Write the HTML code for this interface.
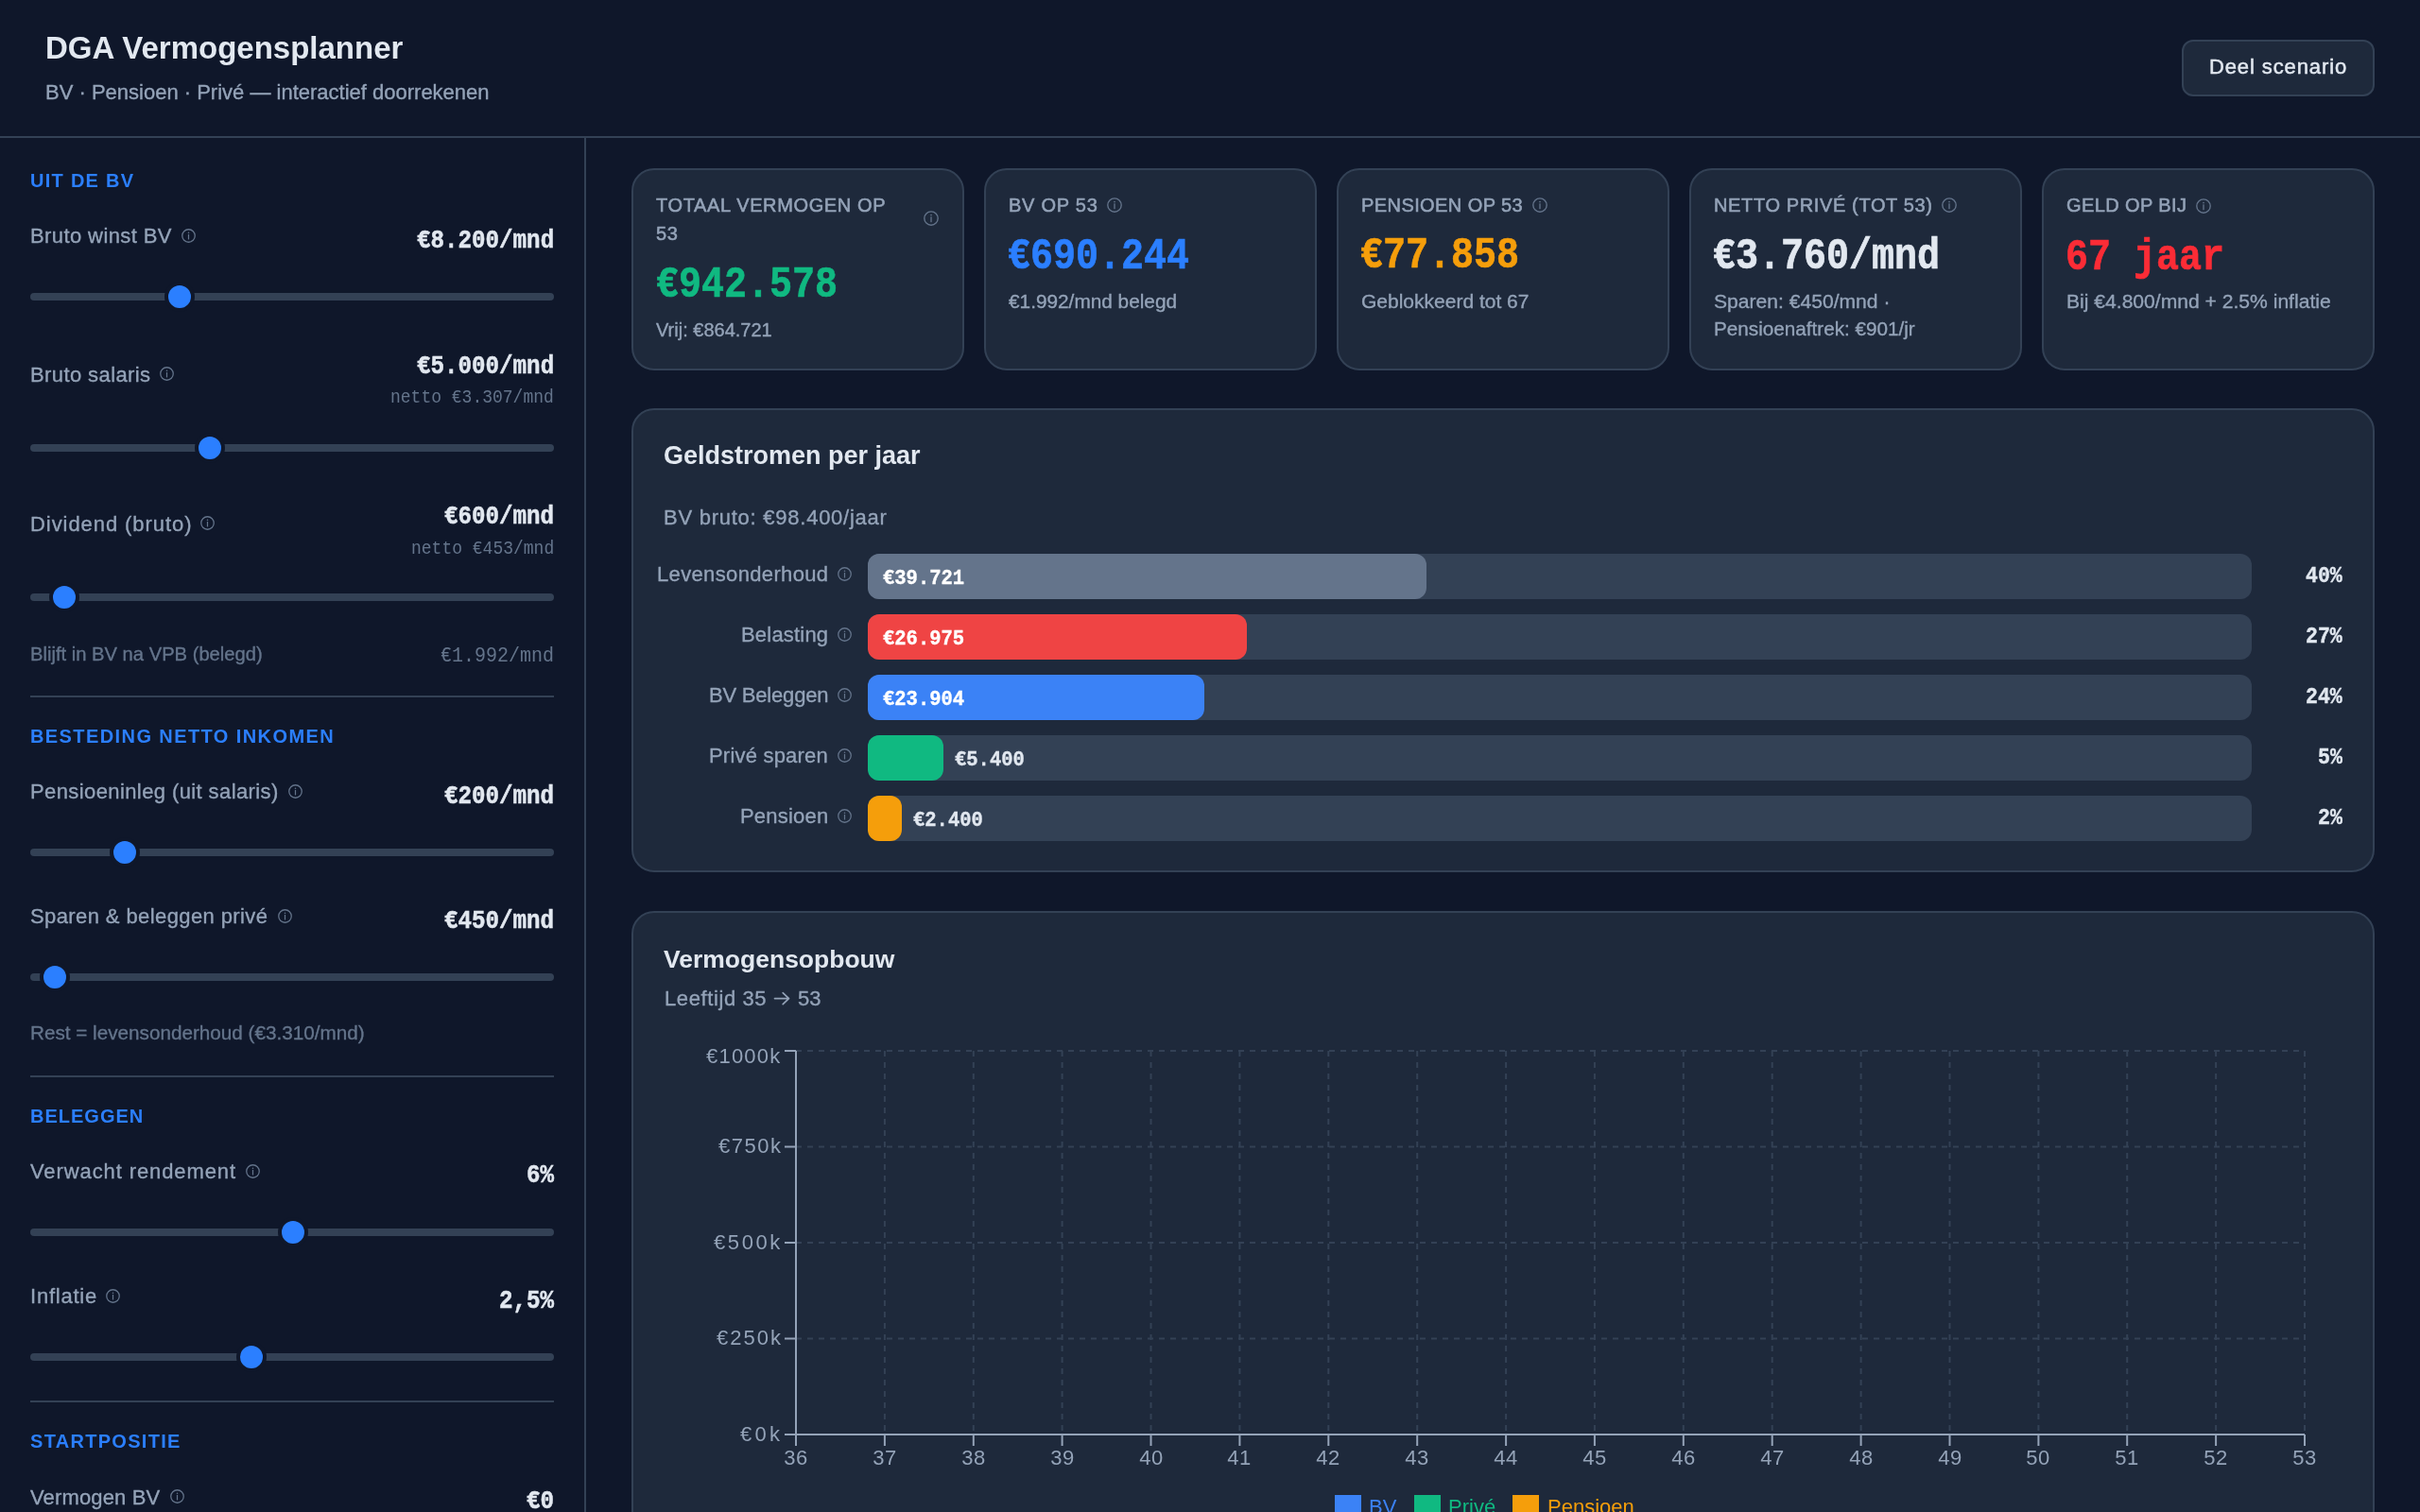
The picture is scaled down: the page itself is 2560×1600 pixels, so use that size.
<!DOCTYPE html>
<html><head><meta charset='utf-8'><style>
html,body{margin:0;padding:0;width:2560px;height:1600px;overflow:hidden;background:#0f172a;}
.t{position:absolute;white-space:nowrap;will-change:transform;}
.b{position:absolute;}
</style></head><body>
<div class='t' style='top:34.0px;font-size:33px;line-height:33px;font-family:"Liberation Sans", sans-serif;font-weight:700;color:#e2e8f0;left:48.0px;'>DGA Vermogensplanner</div>
<div class='t' style='top:87.2px;font-size:22px;line-height:22px;font-family:"Liberation Sans", sans-serif;font-weight:400;color:#94a3b8;-webkit-text-stroke-width:0.35px;left:48.0px;'>BV · Pensioen · Privé — interactief doorrekenen</div>
<div class='b' style='left:2308px;top:42px;width:204px;height:60px;background:#1e293b;border-radius:12px;box-sizing:border-box;border:2px solid #334155;'></div>
<div class='t' style='top:59.9px;font-size:22px;line-height:22px;font-family:"Liberation Sans", sans-serif;font-weight:400;color:#e2e8f0;letter-spacing:0.9px;left:2410.0px;transform:translateX(-50%);-webkit-text-stroke:0.5px #e2e8f0;'>Deel scenario</div>
<div class='b' style='left:0px;top:144px;width:2560px;height:2px;background:#334155;border-radius:0px;'></div>
<div class='b' style='left:618px;top:146px;width:2px;height:1454px;background:#334155;border-radius:0px;'></div>
<div class='t' style='top:181.3px;font-size:20px;line-height:20px;font-family:"Liberation Sans", sans-serif;font-weight:700;color:#2b7fff;letter-spacing:1.28px;left:32.0px;'>UIT DE BV</div>
<div class='t' style='top:239.4px;font-size:22px;line-height:22px;font-family:"Liberation Sans", sans-serif;font-weight:400;color:#94a3b8;letter-spacing:0.4px;-webkit-text-stroke-width:0.35px;left:32.0px;'>Bruto winst BV</div>
<svg class='b' style='left:192.0px;top:241.5px' width='15' height='15' viewBox='0 0 16 16'><circle cx='8' cy='8' r='7.2' fill='none' stroke='#64748b' stroke-width='1.35'/><circle cx='8' cy='4.5' r='0.85' fill='#64748b'/><rect x='7.35' y='6.3' width='1.3' height='5.9' fill='#64748b'/></svg>
<div class='t' style='top:244.1px;font-size:24.2px;line-height:24.2px;font-family:"Liberation Mono", monospace;font-weight:700;color:#e2e8f0;-webkit-text-stroke-width:0.45px;right:1974.0px;text-align:right;transform:scaleY(1.16);transform-origin:0 18.5px;'>€8.200/mnd</div>
<div class='b' style='left:32px;top:309.8px;width:554px;height:8px;background:#334155;border-radius:4px;'></div>
<div class='b' style='left:173.7px;top:297.8px;width:24px;height:24px;border-radius:50%;background:#2b7fff;border:4px solid #0f172a'></div>
<div class='t' style='top:386.0px;font-size:22px;line-height:22px;font-family:"Liberation Sans", sans-serif;font-weight:400;color:#94a3b8;letter-spacing:0.4px;-webkit-text-stroke-width:0.35px;left:32.0px;'>Bruto salaris</div>
<svg class='b' style='left:169.2px;top:387.5px' width='15' height='15' viewBox='0 0 16 16'><circle cx='8' cy='8' r='7.2' fill='none' stroke='#64748b' stroke-width='1.35'/><circle cx='8' cy='4.5' r='0.85' fill='#64748b'/><rect x='7.35' y='6.3' width='1.3' height='5.9' fill='#64748b'/></svg>
<div class='t' style='top:376.5px;font-size:24.2px;line-height:24.2px;font-family:"Liberation Mono", monospace;font-weight:700;color:#e2e8f0;-webkit-text-stroke-width:0.45px;right:1974.0px;text-align:right;transform:scaleY(1.16);transform-origin:0 18.5px;'>€5.000/mnd</div>
<div class='t' style='top:412.2px;font-size:18px;line-height:18px;font-family:"Liberation Mono", monospace;font-weight:400;color:#64748b;right:1974.0px;text-align:right;transform:scaleY(1.08);transform-origin:0 13.8px;'>netto €3.307/mnd</div>
<div class='b' style='left:32px;top:469.9px;width:554px;height:8px;background:#334155;border-radius:4px;'></div>
<div class='b' style='left:205.7px;top:457.9px;width:24px;height:24px;border-radius:50%;background:#2b7fff;border:4px solid #0f172a'></div>
<div class='t' style='top:543.7px;font-size:22px;line-height:22px;font-family:"Liberation Sans", sans-serif;font-weight:400;color:#94a3b8;letter-spacing:0.93px;-webkit-text-stroke-width:0.35px;left:32.0px;'>Dividend (bruto)</div>
<svg class='b' style='left:211.5px;top:546.1px' width='15' height='15' viewBox='0 0 16 16'><circle cx='8' cy='8' r='7.2' fill='none' stroke='#64748b' stroke-width='1.35'/><circle cx='8' cy='4.5' r='0.85' fill='#64748b'/><rect x='7.35' y='6.3' width='1.3' height='5.9' fill='#64748b'/></svg>
<div class='t' style='top:535.9px;font-size:24.2px;line-height:24.2px;font-family:"Liberation Mono", monospace;font-weight:700;color:#e2e8f0;-webkit-text-stroke-width:0.45px;right:1974.0px;text-align:right;transform:scaleY(1.16);transform-origin:0 18.5px;'>€600/mnd</div>
<div class='t' style='top:571.8px;font-size:18px;line-height:18px;font-family:"Liberation Mono", monospace;font-weight:400;color:#64748b;right:1974.0px;text-align:right;transform:scaleY(1.08);transform-origin:0 13.8px;'>netto €453/mnd</div>
<div class='b' style='left:32px;top:627.9px;width:554px;height:8px;background:#334155;border-radius:4px;'></div>
<div class='b' style='left:51.7px;top:615.9px;width:24px;height:24px;border-radius:50%;background:#2b7fff;border:4px solid #0f172a'></div>
<div class='t' style='top:681.5px;font-size:20.2px;line-height:20.2px;font-family:"Liberation Sans", sans-serif;font-weight:400;color:#64748b;-webkit-text-stroke-width:0.35px;left:32.0px;'>Blijft in BV na VPB (belegd)</div>
<div class='t' style='top:684.7px;font-size:20px;line-height:20px;font-family:"Liberation Mono", monospace;font-weight:400;color:#64748b;right:1974.0px;text-align:right;transform:scaleY(1.08);transform-origin:0 15.3px;'>€1.992/mnd</div>
<div class='b' style='left:32px;top:736px;width:554px;height:2px;background:#334155;border-radius:0px;'></div>
<div class='t' style='top:769.0px;font-size:20px;line-height:20px;font-family:"Liberation Sans", sans-serif;font-weight:700;color:#2b7fff;letter-spacing:1.41px;left:32.0px;'>BESTEDING NETTO INKOMEN</div>
<div class='t' style='top:827.4px;font-size:22px;line-height:22px;font-family:"Liberation Sans", sans-serif;font-weight:400;color:#94a3b8;letter-spacing:0.4px;-webkit-text-stroke-width:0.35px;left:32.0px;'>Pensioeninleg (uit salaris)</div>
<svg class='b' style='left:304.5px;top:830.0px' width='15' height='15' viewBox='0 0 16 16'><circle cx='8' cy='8' r='7.2' fill='none' stroke='#64748b' stroke-width='1.35'/><circle cx='8' cy='4.5' r='0.85' fill='#64748b'/><rect x='7.35' y='6.3' width='1.3' height='5.9' fill='#64748b'/></svg>
<div class='t' style='top:831.5px;font-size:24.2px;line-height:24.2px;font-family:"Liberation Mono", monospace;font-weight:700;color:#e2e8f0;-webkit-text-stroke-width:0.45px;right:1974.0px;text-align:right;transform:scaleY(1.16);transform-origin:0 18.5px;'>€200/mnd</div>
<div class='b' style='left:32px;top:897.7px;width:554px;height:8px;background:#334155;border-radius:4px;'></div>
<div class='b' style='left:115.69999999999999px;top:885.7px;width:24px;height:24px;border-radius:50%;background:#2b7fff;border:4px solid #0f172a'></div>
<div class='t' style='top:959.4px;font-size:22px;line-height:22px;font-family:"Liberation Sans", sans-serif;font-weight:400;color:#94a3b8;letter-spacing:0.4px;-webkit-text-stroke-width:0.35px;left:32.0px;'>Sparen &amp; beleggen privé</div>
<svg class='b' style='left:293.5px;top:962.1px' width='15' height='15' viewBox='0 0 16 16'><circle cx='8' cy='8' r='7.2' fill='none' stroke='#64748b' stroke-width='1.35'/><circle cx='8' cy='4.5' r='0.85' fill='#64748b'/><rect x='7.35' y='6.3' width='1.3' height='5.9' fill='#64748b'/></svg>
<div class='t' style='top:964.0px;font-size:24.2px;line-height:24.2px;font-family:"Liberation Mono", monospace;font-weight:700;color:#e2e8f0;-webkit-text-stroke-width:0.45px;right:1974.0px;text-align:right;transform:scaleY(1.16);transform-origin:0 18.5px;'>€450/mnd</div>
<div class='b' style='left:32px;top:1030px;width:554px;height:8px;background:#334155;border-radius:4px;'></div>
<div class='b' style='left:41.7px;top:1018px;width:24px;height:24px;border-radius:50%;background:#2b7fff;border:4px solid #0f172a'></div>
<div class='t' style='top:1082.5px;font-size:20.7px;line-height:20.7px;font-family:"Liberation Sans", sans-serif;font-weight:400;color:#64748b;-webkit-text-stroke-width:0.35px;left:32.0px;'>Rest = levensonderhoud (€3.310/mnd)</div>
<div class='b' style='left:32px;top:1138px;width:554px;height:2px;background:#334155;border-radius:0px;'></div>
<div class='t' style='top:1170.9px;font-size:20px;line-height:20px;font-family:"Liberation Sans", sans-serif;font-weight:700;color:#2b7fff;letter-spacing:1.0px;left:32.0px;'>BELEGGEN</div>
<div class='t' style='top:1229.4px;font-size:22px;line-height:22px;font-family:"Liberation Sans", sans-serif;font-weight:400;color:#94a3b8;letter-spacing:0.9px;-webkit-text-stroke-width:0.35px;left:32.0px;'>Verwacht rendement</div>
<svg class='b' style='left:259.5px;top:1231.9px' width='15' height='15' viewBox='0 0 16 16'><circle cx='8' cy='8' r='7.2' fill='none' stroke='#64748b' stroke-width='1.35'/><circle cx='8' cy='4.5' r='0.85' fill='#64748b'/><rect x='7.35' y='6.3' width='1.3' height='5.9' fill='#64748b'/></svg>
<div class='t' style='top:1233.3px;font-size:24.2px;line-height:24.2px;font-family:"Liberation Mono", monospace;font-weight:700;color:#e2e8f0;-webkit-text-stroke-width:0.45px;right:1974.0px;text-align:right;transform:scaleY(1.16);transform-origin:0 18.5px;'>6%</div>
<div class='b' style='left:32px;top:1300px;width:554px;height:8px;background:#334155;border-radius:4px;'></div>
<div class='b' style='left:294px;top:1288px;width:24px;height:24px;border-radius:50%;background:#2b7fff;border:4px solid #0f172a'></div>
<div class='t' style='top:1361.4px;font-size:22px;line-height:22px;font-family:"Liberation Sans", sans-serif;font-weight:400;color:#94a3b8;letter-spacing:0.77px;-webkit-text-stroke-width:0.35px;left:32.0px;'>Inflatie</div>
<svg class='b' style='left:111.5px;top:1364.0px' width='15' height='15' viewBox='0 0 16 16'><circle cx='8' cy='8' r='7.2' fill='none' stroke='#64748b' stroke-width='1.35'/><circle cx='8' cy='4.5' r='0.85' fill='#64748b'/><rect x='7.35' y='6.3' width='1.3' height='5.9' fill='#64748b'/></svg>
<div class='t' style='top:1365.5px;font-size:24.2px;line-height:24.2px;font-family:"Liberation Mono", monospace;font-weight:700;color:#e2e8f0;-webkit-text-stroke-width:0.45px;right:1974.0px;text-align:right;transform:scaleY(1.16);transform-origin:0 18.5px;'>2,5%</div>
<div class='b' style='left:32px;top:1432px;width:554px;height:8px;background:#334155;border-radius:4px;'></div>
<div class='b' style='left:249.89999999999998px;top:1420px;width:24px;height:24px;border-radius:50%;background:#2b7fff;border:4px solid #0f172a'></div>
<div class='b' style='left:32px;top:1482px;width:554px;height:2px;background:#334155;border-radius:0px;'></div>
<div class='t' style='top:1514.9px;font-size:20px;line-height:20px;font-family:"Liberation Sans", sans-serif;font-weight:700;color:#2b7fff;letter-spacing:1.3px;left:32.0px;'>STARTPOSITIE</div>
<div class='t' style='top:1574.0px;font-size:22px;line-height:22px;font-family:"Liberation Sans", sans-serif;font-weight:400;color:#94a3b8;letter-spacing:0.15px;-webkit-text-stroke-width:0.35px;left:32.0px;'>Vermogen BV</div>
<svg class='b' style='left:179.8px;top:1575.9px' width='15' height='15' viewBox='0 0 16 16'><circle cx='8' cy='8' r='7.2' fill='none' stroke='#64748b' stroke-width='1.35'/><circle cx='8' cy='4.5' r='0.85' fill='#64748b'/><rect x='7.35' y='6.3' width='1.3' height='5.9' fill='#64748b'/></svg>
<div class='t' style='top:1577.5px;font-size:24.2px;line-height:24.2px;font-family:"Liberation Mono", monospace;font-weight:700;color:#e2e8f0;-webkit-text-stroke-width:0.45px;right:1974.0px;text-align:right;transform:scaleY(1.16);transform-origin:0 18.5px;'>€0</div>
<div class='b' style='left:668px;top:178px;width:352px;height:214px;background:#1e293b;border-radius:24px;box-sizing:border-box;border:2px solid #334155;'></div>
<div class='b' style='left:1041px;top:178px;width:352px;height:214px;background:#1e293b;border-radius:24px;box-sizing:border-box;border:2px solid #334155;'></div>
<div class='b' style='left:1414px;top:178px;width:352px;height:214px;background:#1e293b;border-radius:24px;box-sizing:border-box;border:2px solid #334155;'></div>
<div class='b' style='left:1787px;top:178px;width:352px;height:214px;background:#1e293b;border-radius:24px;box-sizing:border-box;border:2px solid #334155;'></div>
<div class='b' style='left:2160px;top:178px;width:352px;height:214px;background:#1e293b;border-radius:24px;box-sizing:border-box;border:2px solid #334155;'></div>
<div class='t' style='top:207.4px;font-size:20px;line-height:20px;font-family:"Liberation Sans", sans-serif;font-weight:400;color:#94a3b8;letter-spacing:0.63px;left:694.0px;-webkit-text-stroke:0.55px #94a3b8;'>TOTAAL VERMOGEN OP</div>
<div class='t' style='top:236.9px;font-size:20px;line-height:20px;font-family:"Liberation Sans", sans-serif;font-weight:400;color:#94a3b8;letter-spacing:0.75px;left:694.0px;-webkit-text-stroke:0.55px #94a3b8;'>53</div>
<svg class='b' style='left:976.8px;top:223.0px' width='16' height='16' viewBox='0 0 16 16'><circle cx='8' cy='8' r='7.2' fill='none' stroke='#64748b' stroke-width='1.35'/><circle cx='8' cy='4.5' r='0.85' fill='#64748b'/><rect x='7.35' y='6.3' width='1.3' height='5.9' fill='#64748b'/></svg>
<div class='t' style='top:283.9px;font-size:40px;line-height:40px;font-family:"Liberation Mono", monospace;font-weight:700;color:#10b981;-webkit-text-stroke-width:0.6px;left:694.0px;transform:scaleY(1.17);transform-origin:0 30.6px;'>€942.578</div>
<div class='t' style='top:338.7px;font-size:20px;line-height:20px;font-family:"Liberation Sans", sans-serif;font-weight:400;color:#94a3b8;-webkit-text-stroke-width:0.35px;left:694.0px;'>Vrij: €864.721</div>
<div class='t' style='top:207.1px;font-size:20px;line-height:20px;font-family:"Liberation Sans", sans-serif;font-weight:400;color:#94a3b8;letter-spacing:0.75px;left:1067.0px;-webkit-text-stroke:0.55px #94a3b8;'>BV OP 53</div>
<svg class='b' style='left:1170.8px;top:209.2px' width='16' height='16' viewBox='0 0 16 16'><circle cx='8' cy='8' r='7.2' fill='none' stroke='#64748b' stroke-width='1.35'/><circle cx='8' cy='4.5' r='0.85' fill='#64748b'/><rect x='7.35' y='6.3' width='1.3' height='5.9' fill='#64748b'/></svg>
<div class='t' style='top:254.4px;font-size:40px;line-height:40px;font-family:"Liberation Mono", monospace;font-weight:700;color:#2b7fff;-webkit-text-stroke-width:0.6px;left:1066.0px;transform:scaleY(1.17);transform-origin:0 30.6px;'>€690.244</div>
<div class='t' style='top:308.7px;font-size:20.8px;line-height:20.8px;font-family:"Liberation Sans", sans-serif;font-weight:400;color:#94a3b8;-webkit-text-stroke-width:0.35px;left:1067.0px;'>€1.992/mnd belegd</div>
<div class='t' style='top:207.1px;font-size:20px;line-height:20px;font-family:"Liberation Sans", sans-serif;font-weight:400;color:#94a3b8;letter-spacing:0.42px;left:1440.0px;-webkit-text-stroke:0.55px #94a3b8;'>PENSIOEN OP 53</div>
<svg class='b' style='left:1620.6px;top:209.0px' width='16' height='16' viewBox='0 0 16 16'><circle cx='8' cy='8' r='7.2' fill='none' stroke='#64748b' stroke-width='1.35'/><circle cx='8' cy='4.5' r='0.85' fill='#64748b'/><rect x='7.35' y='6.3' width='1.3' height='5.9' fill='#64748b'/></svg>
<div class='t' style='top:253.4px;font-size:40px;line-height:40px;font-family:"Liberation Mono", monospace;font-weight:700;color:#f59e0b;-webkit-text-stroke-width:0.6px;left:1439.0px;transform:scaleY(1.17);transform-origin:0 30.6px;'>€77.858</div>
<div class='t' style='top:308.3px;font-size:21px;line-height:21px;font-family:"Liberation Sans", sans-serif;font-weight:400;color:#94a3b8;-webkit-text-stroke-width:0.35px;left:1440.0px;'>Geblokkeerd tot 67</div>
<div class='t' style='top:207.3px;font-size:20px;line-height:20px;font-family:"Liberation Sans", sans-serif;font-weight:400;color:#94a3b8;letter-spacing:0.63px;left:1813.0px;-webkit-text-stroke:0.55px #94a3b8;'>NETTO PRIVÉ (TOT 53)</div>
<svg class='b' style='left:2053.5px;top:209.2px' width='16' height='16' viewBox='0 0 16 16'><circle cx='8' cy='8' r='7.2' fill='none' stroke='#64748b' stroke-width='1.35'/><circle cx='8' cy='4.5' r='0.85' fill='#64748b'/><rect x='7.35' y='6.3' width='1.3' height='5.9' fill='#64748b'/></svg>
<div class='t' style='top:253.9px;font-size:40px;line-height:40px;font-family:"Liberation Mono", monospace;font-weight:700;color:#e2e8f0;-webkit-text-stroke-width:0.6px;left:1812.0px;transform:scaleY(1.17);transform-origin:0 30.6px;'>€3.760/mnd</div>
<div class='t' style='top:307.8px;font-size:21.1px;line-height:21.1px;font-family:"Liberation Sans", sans-serif;font-weight:400;color:#94a3b8;-webkit-text-stroke-width:0.35px;left:1813.0px;'>Sparen: €450/mnd ·</div>
<div class='t' style='top:337.9px;font-size:20.7px;line-height:20.7px;font-family:"Liberation Sans", sans-serif;font-weight:400;color:#94a3b8;-webkit-text-stroke-width:0.35px;left:1813.0px;'>Pensioenaftrek: €901/jr</div>
<div class='t' style='top:207.1px;font-size:20px;line-height:20px;font-family:"Liberation Sans", sans-serif;font-weight:400;color:#94a3b8;letter-spacing:0.4px;left:2186.0px;-webkit-text-stroke:0.55px #94a3b8;'>GELD OP BIJ</div>
<svg class='b' style='left:2322.7px;top:209.5px' width='16' height='16' viewBox='0 0 16 16'><circle cx='8' cy='8' r='7.2' fill='none' stroke='#64748b' stroke-width='1.35'/><circle cx='8' cy='4.5' r='0.85' fill='#64748b'/><rect x='7.35' y='6.3' width='1.3' height='5.9' fill='#64748b'/></svg>
<div class='t' style='top:254.6px;font-size:40px;line-height:40px;font-family:"Liberation Mono", monospace;font-weight:700;color:#fb2c36;-webkit-text-stroke-width:0.6px;left:2185.0px;transform:scaleY(1.17);transform-origin:0 30.6px;'>67 jaar</div>
<div class='t' style='top:308.1px;font-size:21.1px;line-height:21.1px;font-family:"Liberation Sans", sans-serif;font-weight:400;color:#94a3b8;-webkit-text-stroke-width:0.35px;left:2186.0px;'>Bij €4.800/mnd + 2.5% inflatie</div>
<div class='b' style='left:668px;top:432px;width:1844px;height:491px;background:#1e293b;border-radius:24px;box-sizing:border-box;border:2px solid #334155;'></div>
<div class='t' style='top:469.4px;font-size:27px;line-height:27px;font-family:"Liberation Sans", sans-serif;font-weight:700;color:#e2e8f0;left:702.0px;'>Geldstromen per jaar</div>
<div class='t' style='top:537.2px;font-size:22px;line-height:22px;font-family:"Liberation Sans", sans-serif;font-weight:400;color:#94a3b8;letter-spacing:0.75px;-webkit-text-stroke-width:0.35px;left:702.0px;'>BV bruto: €98.400/jaar</div>
<div class='t' style='top:597.2px;font-size:22px;line-height:22px;font-family:"Liberation Sans", sans-serif;font-weight:400;color:#94a3b8;letter-spacing:0.35px;-webkit-text-stroke-width:0.35px;right:1683.7px;text-align:right;'>Levensonderhoud</div>
<svg class='b' style='left:885.7px;top:599.5px' width='15' height='15' viewBox='0 0 16 16'><circle cx='8' cy='8' r='7.2' fill='none' stroke='#64748b' stroke-width='1.35'/><circle cx='8' cy='4.5' r='0.85' fill='#64748b'/><rect x='7.35' y='6.3' width='1.3' height='5.9' fill='#64748b'/></svg>
<div class='b' style='left:918px;top:586px;width:1464px;height:48px;background:#334155;border-radius:12px;'></div>
<div class='b' style='left:918px;top:586px;width:591.0px;height:48px;background:#64748b;border-radius:12px;'></div>
<div class='t' style='top:602.9px;font-size:20.5px;line-height:20.5px;font-family:"Liberation Mono", monospace;font-weight:700;color:#ffffff;-webkit-text-stroke-width:0.35px;left:934.0px;transform:scaleY(1.12);transform-origin:0 15.7px;'>€39.721</div>
<div class='t' style='top:600.2px;font-size:21.5px;line-height:21.5px;font-family:"Liberation Mono", monospace;font-weight:700;color:#e2e8f0;-webkit-text-stroke-width:0.35px;right:82.0px;text-align:right;transform:scaleY(1.08);transform-origin:0 16.5px;'>40%</div>
<div class='t' style='top:661.2px;font-size:22px;line-height:22px;font-family:"Liberation Sans", sans-serif;font-weight:400;color:#94a3b8;letter-spacing:0.2px;-webkit-text-stroke-width:0.35px;right:1683.8px;text-align:right;'>Belasting</div>
<svg class='b' style='left:885.7px;top:663.5px' width='15' height='15' viewBox='0 0 16 16'><circle cx='8' cy='8' r='7.2' fill='none' stroke='#64748b' stroke-width='1.35'/><circle cx='8' cy='4.5' r='0.85' fill='#64748b'/><rect x='7.35' y='6.3' width='1.3' height='5.9' fill='#64748b'/></svg>
<div class='b' style='left:918px;top:650px;width:1464px;height:48px;background:#334155;border-radius:12px;'></div>
<div class='b' style='left:918px;top:650px;width:401.3px;height:48px;background:#ef4444;border-radius:12px;'></div>
<div class='t' style='top:666.9px;font-size:20.5px;line-height:20.5px;font-family:"Liberation Mono", monospace;font-weight:700;color:#ffffff;-webkit-text-stroke-width:0.35px;left:934.0px;transform:scaleY(1.12);transform-origin:0 15.7px;'>€26.975</div>
<div class='t' style='top:664.2px;font-size:21.5px;line-height:21.5px;font-family:"Liberation Mono", monospace;font-weight:700;color:#e2e8f0;-webkit-text-stroke-width:0.35px;right:82.0px;text-align:right;transform:scaleY(1.08);transform-origin:0 16.5px;'>27%</div>
<div class='t' style='top:725.2px;font-size:22px;line-height:22px;font-family:"Liberation Sans", sans-serif;font-weight:400;color:#94a3b8;letter-spacing:-0.2px;-webkit-text-stroke-width:0.35px;right:1684.2px;text-align:right;'>BV Beleggen</div>
<svg class='b' style='left:885.7px;top:727.5px' width='15' height='15' viewBox='0 0 16 16'><circle cx='8' cy='8' r='7.2' fill='none' stroke='#64748b' stroke-width='1.35'/><circle cx='8' cy='4.5' r='0.85' fill='#64748b'/><rect x='7.35' y='6.3' width='1.3' height='5.9' fill='#64748b'/></svg>
<div class='b' style='left:918px;top:714px;width:1464px;height:48px;background:#334155;border-radius:12px;'></div>
<div class='b' style='left:918px;top:714px;width:355.6px;height:48px;background:#3b82f6;border-radius:12px;'></div>
<div class='t' style='top:730.9px;font-size:20.5px;line-height:20.5px;font-family:"Liberation Mono", monospace;font-weight:700;color:#ffffff;-webkit-text-stroke-width:0.35px;left:934.0px;transform:scaleY(1.12);transform-origin:0 15.7px;'>€23.904</div>
<div class='t' style='top:728.2px;font-size:21.5px;line-height:21.5px;font-family:"Liberation Mono", monospace;font-weight:700;color:#e2e8f0;-webkit-text-stroke-width:0.35px;right:82.0px;text-align:right;transform:scaleY(1.08);transform-origin:0 16.5px;'>24%</div>
<div class='t' style='top:789.2px;font-size:22px;line-height:22px;font-family:"Liberation Sans", sans-serif;font-weight:400;color:#94a3b8;letter-spacing:0.2px;-webkit-text-stroke-width:0.35px;right:1683.8px;text-align:right;'>Privé sparen</div>
<svg class='b' style='left:885.7px;top:791.5px' width='15' height='15' viewBox='0 0 16 16'><circle cx='8' cy='8' r='7.2' fill='none' stroke='#64748b' stroke-width='1.35'/><circle cx='8' cy='4.5' r='0.85' fill='#64748b'/><rect x='7.35' y='6.3' width='1.3' height='5.9' fill='#64748b'/></svg>
<div class='b' style='left:918px;top:778px;width:1464px;height:48px;background:#334155;border-radius:12px;'></div>
<div class='b' style='left:918px;top:778px;width:80.3px;height:48px;background:#10b981;border-radius:12px;'></div>
<div class='t' style='top:794.9px;font-size:20.5px;line-height:20.5px;font-family:"Liberation Mono", monospace;font-weight:700;color:#e2e8f0;-webkit-text-stroke-width:0.35px;left:1010.3px;transform:scaleY(1.12);transform-origin:0 15.7px;'>€5.400</div>
<div class='t' style='top:792.2px;font-size:21.5px;line-height:21.5px;font-family:"Liberation Mono", monospace;font-weight:700;color:#e2e8f0;-webkit-text-stroke-width:0.35px;right:82.0px;text-align:right;transform:scaleY(1.08);transform-origin:0 16.5px;'>5%</div>
<div class='t' style='top:853.2px;font-size:22px;line-height:22px;font-family:"Liberation Sans", sans-serif;font-weight:400;color:#94a3b8;letter-spacing:0.2px;-webkit-text-stroke-width:0.35px;right:1683.8px;text-align:right;'>Pensioen</div>
<svg class='b' style='left:885.7px;top:855.5px' width='15' height='15' viewBox='0 0 16 16'><circle cx='8' cy='8' r='7.2' fill='none' stroke='#64748b' stroke-width='1.35'/><circle cx='8' cy='4.5' r='0.85' fill='#64748b'/><rect x='7.35' y='6.3' width='1.3' height='5.9' fill='#64748b'/></svg>
<div class='b' style='left:918px;top:842px;width:1464px;height:48px;background:#334155;border-radius:12px;'></div>
<div class='b' style='left:918px;top:842px;width:35.7px;height:48px;background:#f59e0b;border-radius:12px;'></div>
<div class='t' style='top:858.9px;font-size:20.5px;line-height:20.5px;font-family:"Liberation Mono", monospace;font-weight:700;color:#e2e8f0;-webkit-text-stroke-width:0.35px;left:965.7px;transform:scaleY(1.12);transform-origin:0 15.7px;'>€2.400</div>
<div class='t' style='top:856.2px;font-size:21.5px;line-height:21.5px;font-family:"Liberation Mono", monospace;font-weight:700;color:#e2e8f0;-webkit-text-stroke-width:0.35px;right:82.0px;text-align:right;transform:scaleY(1.08);transform-origin:0 16.5px;'>2%</div>
<div class='b' style='left:668px;top:964px;width:1844px;height:700px;background:#1e293b;border-radius:24px;box-sizing:border-box;border:2px solid #334155;'></div>
<div class='t' style='top:1001.9px;font-size:26.5px;line-height:26.5px;font-family:"Liberation Sans", sans-serif;font-weight:700;color:#e2e8f0;left:702.0px;'>Vermogensopbouw</div>
<div class='t' style='top:1045.5px;font-size:22px;line-height:22px;font-family:"Liberation Sans", sans-serif;font-weight:400;color:#94a3b8;letter-spacing:0.6px;-webkit-text-stroke-width:0.35px;left:703.0px;'>Leeftijd 35</div>
<svg class='b' style='left:817px;top:1048px' width='20' height='18' viewBox='0 0 20 18'><path d='M2.5 8.6 H17.5 M11.2 2.6 L17.5 8.6 L11.2 14.6' fill='none' stroke='#94a3b8' stroke-width='1.7' stroke-linecap='round' stroke-linejoin='round'/></svg>
<div class='t' style='top:1045.5px;font-size:22px;line-height:22px;font-family:"Liberation Sans", sans-serif;font-weight:400;color:#94a3b8;-webkit-text-stroke-width:0.35px;left:843.7px;'>53</div>
<svg class='b' style='left:0;top:0' width='2560' height='1600'><line x1='842' y1='1112.0' x2='2438' y2='1112.0' stroke='#334155' stroke-width='2' stroke-dasharray='6 6'/><line x1='842' y1='1213.5' x2='2438' y2='1213.5' stroke='#334155' stroke-width='2' stroke-dasharray='6 6'/><line x1='842' y1='1315.0' x2='2438' y2='1315.0' stroke='#334155' stroke-width='2' stroke-dasharray='6 6'/><line x1='842' y1='1416.5' x2='2438' y2='1416.5' stroke='#334155' stroke-width='2' stroke-dasharray='6 6'/><line x1='935.9' y1='1112' x2='935.9' y2='1518' stroke='#334155' stroke-width='2' stroke-dasharray='6 6'/><line x1='1029.8' y1='1112' x2='1029.8' y2='1518' stroke='#334155' stroke-width='2' stroke-dasharray='6 6'/><line x1='1123.6' y1='1112' x2='1123.6' y2='1518' stroke='#334155' stroke-width='2' stroke-dasharray='6 6'/><line x1='1217.5' y1='1112' x2='1217.5' y2='1518' stroke='#334155' stroke-width='2' stroke-dasharray='6 6'/><line x1='1311.4' y1='1112' x2='1311.4' y2='1518' stroke='#334155' stroke-width='2' stroke-dasharray='6 6'/><line x1='1405.3' y1='1112' x2='1405.3' y2='1518' stroke='#334155' stroke-width='2' stroke-dasharray='6 6'/><line x1='1499.2' y1='1112' x2='1499.2' y2='1518' stroke='#334155' stroke-width='2' stroke-dasharray='6 6'/><line x1='1593.1' y1='1112' x2='1593.1' y2='1518' stroke='#334155' stroke-width='2' stroke-dasharray='6 6'/><line x1='1686.9' y1='1112' x2='1686.9' y2='1518' stroke='#334155' stroke-width='2' stroke-dasharray='6 6'/><line x1='1780.8' y1='1112' x2='1780.8' y2='1518' stroke='#334155' stroke-width='2' stroke-dasharray='6 6'/><line x1='1874.7' y1='1112' x2='1874.7' y2='1518' stroke='#334155' stroke-width='2' stroke-dasharray='6 6'/><line x1='1968.6' y1='1112' x2='1968.6' y2='1518' stroke='#334155' stroke-width='2' stroke-dasharray='6 6'/><line x1='2062.5' y1='1112' x2='2062.5' y2='1518' stroke='#334155' stroke-width='2' stroke-dasharray='6 6'/><line x1='2156.4' y1='1112' x2='2156.4' y2='1518' stroke='#334155' stroke-width='2' stroke-dasharray='6 6'/><line x1='2250.2' y1='1112' x2='2250.2' y2='1518' stroke='#334155' stroke-width='2' stroke-dasharray='6 6'/><line x1='2344.1' y1='1112' x2='2344.1' y2='1518' stroke='#334155' stroke-width='2' stroke-dasharray='6 6'/><line x1='2438.0' y1='1112' x2='2438.0' y2='1518' stroke='#334155' stroke-width='2' stroke-dasharray='6 6'/><line x1='842' y1='1112' x2='842' y2='1518' stroke='#94a3b8' stroke-width='2'/><line x1='842' y1='1518' x2='2438' y2='1518' stroke='#94a3b8' stroke-width='2'/><line x1='830' y1='1112.0' x2='842' y2='1112.0' stroke='#94a3b8' stroke-width='2'/><line x1='830' y1='1213.5' x2='842' y2='1213.5' stroke='#94a3b8' stroke-width='2'/><line x1='830' y1='1315.0' x2='842' y2='1315.0' stroke='#94a3b8' stroke-width='2'/><line x1='830' y1='1416.5' x2='842' y2='1416.5' stroke='#94a3b8' stroke-width='2'/><line x1='830' y1='1518.0' x2='842' y2='1518.0' stroke='#94a3b8' stroke-width='2'/><line x1='842.0' y1='1518' x2='842.0' y2='1530' stroke='#94a3b8' stroke-width='2'/><line x1='935.9' y1='1518' x2='935.9' y2='1530' stroke='#94a3b8' stroke-width='2'/><line x1='1029.8' y1='1518' x2='1029.8' y2='1530' stroke='#94a3b8' stroke-width='2'/><line x1='1123.6' y1='1518' x2='1123.6' y2='1530' stroke='#94a3b8' stroke-width='2'/><line x1='1217.5' y1='1518' x2='1217.5' y2='1530' stroke='#94a3b8' stroke-width='2'/><line x1='1311.4' y1='1518' x2='1311.4' y2='1530' stroke='#94a3b8' stroke-width='2'/><line x1='1405.3' y1='1518' x2='1405.3' y2='1530' stroke='#94a3b8' stroke-width='2'/><line x1='1499.2' y1='1518' x2='1499.2' y2='1530' stroke='#94a3b8' stroke-width='2'/><line x1='1593.1' y1='1518' x2='1593.1' y2='1530' stroke='#94a3b8' stroke-width='2'/><line x1='1686.9' y1='1518' x2='1686.9' y2='1530' stroke='#94a3b8' stroke-width='2'/><line x1='1780.8' y1='1518' x2='1780.8' y2='1530' stroke='#94a3b8' stroke-width='2'/><line x1='1874.7' y1='1518' x2='1874.7' y2='1530' stroke='#94a3b8' stroke-width='2'/><line x1='1968.6' y1='1518' x2='1968.6' y2='1530' stroke='#94a3b8' stroke-width='2'/><line x1='2062.5' y1='1518' x2='2062.5' y2='1530' stroke='#94a3b8' stroke-width='2'/><line x1='2156.4' y1='1518' x2='2156.4' y2='1530' stroke='#94a3b8' stroke-width='2'/><line x1='2250.2' y1='1518' x2='2250.2' y2='1530' stroke='#94a3b8' stroke-width='2'/><line x1='2344.1' y1='1518' x2='2344.1' y2='1530' stroke='#94a3b8' stroke-width='2'/><line x1='2438.0' y1='1518' x2='2438.0' y2='1530' stroke='#94a3b8' stroke-width='2'/></svg>
<div class='t' style='top:1107.4px;font-size:22px;line-height:22px;font-family:"Liberation Sans", sans-serif;font-weight:400;color:#94a3b8;letter-spacing:1.22px;right:1733.3px;text-align:right;'>€1000k</div>
<div class='t' style='top:1202.4px;font-size:22px;line-height:22px;font-family:"Liberation Sans", sans-serif;font-weight:400;color:#94a3b8;letter-spacing:1.5px;right:1733.0px;text-align:right;'>€750k</div>
<div class='t' style='top:1303.9px;font-size:22px;line-height:22px;font-family:"Liberation Sans", sans-serif;font-weight:400;color:#94a3b8;letter-spacing:2.6px;right:1731.9px;text-align:right;'>€500k</div>
<div class='t' style='top:1405.4px;font-size:22px;line-height:22px;font-family:"Liberation Sans", sans-serif;font-weight:400;color:#94a3b8;letter-spacing:2.0px;right:1732.5px;text-align:right;'>€250k</div>
<div class='t' style='top:1506.9px;font-size:22px;line-height:22px;font-family:"Liberation Sans", sans-serif;font-weight:400;color:#94a3b8;letter-spacing:3.3px;right:1731.2px;text-align:right;'>€0k</div>
<div class='t' style='top:1531.9px;font-size:22px;line-height:22px;font-family:"Liberation Sans", sans-serif;font-weight:400;color:#94a3b8;letter-spacing:0.5px;left:842.0px;transform:translateX(-50%);'>36</div>
<div class='t' style='top:1531.9px;font-size:22px;line-height:22px;font-family:"Liberation Sans", sans-serif;font-weight:400;color:#94a3b8;letter-spacing:0.5px;left:935.9px;transform:translateX(-50%);'>37</div>
<div class='t' style='top:1531.9px;font-size:22px;line-height:22px;font-family:"Liberation Sans", sans-serif;font-weight:400;color:#94a3b8;letter-spacing:0.5px;left:1029.8px;transform:translateX(-50%);'>38</div>
<div class='t' style='top:1531.9px;font-size:22px;line-height:22px;font-family:"Liberation Sans", sans-serif;font-weight:400;color:#94a3b8;letter-spacing:0.5px;left:1123.6px;transform:translateX(-50%);'>39</div>
<div class='t' style='top:1531.9px;font-size:22px;line-height:22px;font-family:"Liberation Sans", sans-serif;font-weight:400;color:#94a3b8;letter-spacing:0.5px;left:1217.5px;transform:translateX(-50%);'>40</div>
<div class='t' style='top:1531.9px;font-size:22px;line-height:22px;font-family:"Liberation Sans", sans-serif;font-weight:400;color:#94a3b8;letter-spacing:0.5px;left:1311.4px;transform:translateX(-50%);'>41</div>
<div class='t' style='top:1531.9px;font-size:22px;line-height:22px;font-family:"Liberation Sans", sans-serif;font-weight:400;color:#94a3b8;letter-spacing:0.5px;left:1405.3px;transform:translateX(-50%);'>42</div>
<div class='t' style='top:1531.9px;font-size:22px;line-height:22px;font-family:"Liberation Sans", sans-serif;font-weight:400;color:#94a3b8;letter-spacing:0.5px;left:1499.2px;transform:translateX(-50%);'>43</div>
<div class='t' style='top:1531.9px;font-size:22px;line-height:22px;font-family:"Liberation Sans", sans-serif;font-weight:400;color:#94a3b8;letter-spacing:0.5px;left:1593.1px;transform:translateX(-50%);'>44</div>
<div class='t' style='top:1531.9px;font-size:22px;line-height:22px;font-family:"Liberation Sans", sans-serif;font-weight:400;color:#94a3b8;letter-spacing:0.5px;left:1686.9px;transform:translateX(-50%);'>45</div>
<div class='t' style='top:1531.9px;font-size:22px;line-height:22px;font-family:"Liberation Sans", sans-serif;font-weight:400;color:#94a3b8;letter-spacing:0.5px;left:1780.8px;transform:translateX(-50%);'>46</div>
<div class='t' style='top:1531.9px;font-size:22px;line-height:22px;font-family:"Liberation Sans", sans-serif;font-weight:400;color:#94a3b8;letter-spacing:0.5px;left:1874.7px;transform:translateX(-50%);'>47</div>
<div class='t' style='top:1531.9px;font-size:22px;line-height:22px;font-family:"Liberation Sans", sans-serif;font-weight:400;color:#94a3b8;letter-spacing:0.5px;left:1968.6px;transform:translateX(-50%);'>48</div>
<div class='t' style='top:1531.9px;font-size:22px;line-height:22px;font-family:"Liberation Sans", sans-serif;font-weight:400;color:#94a3b8;letter-spacing:0.5px;left:2062.5px;transform:translateX(-50%);'>49</div>
<div class='t' style='top:1531.9px;font-size:22px;line-height:22px;font-family:"Liberation Sans", sans-serif;font-weight:400;color:#94a3b8;letter-spacing:0.5px;left:2156.4px;transform:translateX(-50%);'>50</div>
<div class='t' style='top:1531.9px;font-size:22px;line-height:22px;font-family:"Liberation Sans", sans-serif;font-weight:400;color:#94a3b8;letter-spacing:0.5px;left:2250.2px;transform:translateX(-50%);'>51</div>
<div class='t' style='top:1531.9px;font-size:22px;line-height:22px;font-family:"Liberation Sans", sans-serif;font-weight:400;color:#94a3b8;letter-spacing:0.5px;left:2344.1px;transform:translateX(-50%);'>52</div>
<div class='t' style='top:1531.9px;font-size:22px;line-height:22px;font-family:"Liberation Sans", sans-serif;font-weight:400;color:#94a3b8;letter-spacing:0.5px;left:2438.0px;transform:translateX(-50%);'>53</div>
<div class='b' style='left:1412px;top:1582px;width:28px;height:28px;background:#3b82f6;border-radius:0px;'></div>
<div class='t' style='top:1583.9px;font-size:22px;line-height:22px;font-family:"Liberation Sans", sans-serif;font-weight:400;color:#3b82f6;left:1448.0px;'>BV</div>
<div class='b' style='left:1496px;top:1582px;width:28px;height:28px;background:#10b981;border-radius:0px;'></div>
<div class='t' style='top:1583.9px;font-size:22px;line-height:22px;font-family:"Liberation Sans", sans-serif;font-weight:400;color:#10b981;left:1532.0px;'>Privé</div>
<div class='b' style='left:1600px;top:1582px;width:28px;height:28px;background:#f59e0b;border-radius:0px;'></div>
<div class='t' style='top:1583.9px;font-size:22px;line-height:22px;font-family:"Liberation Sans", sans-serif;font-weight:400;color:#f59e0b;left:1637.0px;'>Pensioen</div>
</body></html>
